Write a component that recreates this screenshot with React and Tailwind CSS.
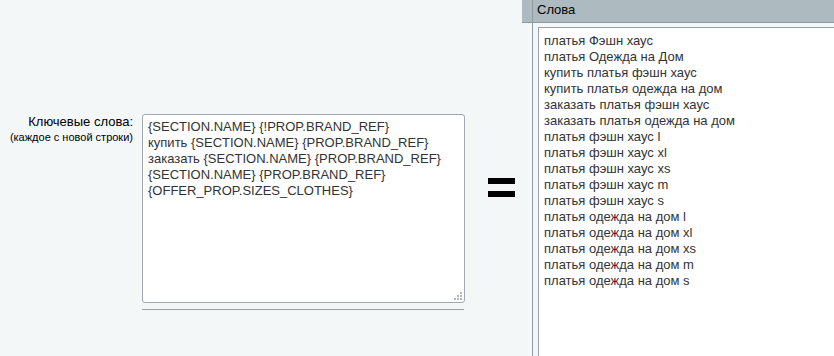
import React from 'react'

const keywords = [
  '{SECTION.NAME} {!PROP.BRAND_REF}',
  'купить {SECTION.NAME} {PROP.BRAND_REF}',
  'заказать {SECTION.NAME} {PROP.BRAND_REF}',
  '{SECTION.NAME} {PROP.BRAND_REF}',
  '{OFFER_PROP.SIZES_CLOTHES}',
]

const words = [
  'платья Фэшн хаус',
  'платья Одежда на Дом',
  'купить платья фэшн хаус',
  'купить платья одежда на дом',
  'заказать платья фэшн хаус',
  'заказать платья одежда на дом',
  'платья фэшн хаус l',
  'платья фэшн хаус xl',
  'платья фэшн хаус xs',
  'платья фэшн хаус m',
  'платья фэшн хаус s',
  'платья одежда на дом l',
  'платья одежда на дом xl',
  'платья одежда на дом xs',
  'платья одежда на дом m',
  'платья одежда на дом s',
]

// little dotted resize grip, like the old browser one
const Grip = () => (
  <svg className="absolute right-[3px] bottom-[3px]" width="8" height="8" viewBox="0 0 8 8">
    {[[6, 0], [3, 3], [6, 3], [0, 6], [3, 6], [6, 6]].map(([x, y], i) => (
      <rect key={i} x={x} y={y} width="2" height="2" fill="#b4b8bd" />
    ))}
  </svg>
)

export default function App() {
  return (
    <div className="flex h-[356px] w-[834px] overflow-hidden bg-[#f4f7f8] font-['Liberation_Sans',Arial,sans-serif] text-black">
      {/* --- LEFT: template --- */}
      <div className="flex w-[522px] shrink-0">
        <div className="flex pt-[114px]">
          <div className="w-[133px] text-right">
            <div className="text-[13px] leading-[16px]">Ключевые слова:</div>
            <div className="text-[11px] leading-[14px]">(каждое с новой строки)</div>
          </div>
          <div className="ml-[9px] w-[323px]">
            <div className="relative">
              <textarea
                readOnly
                defaultValue={keywords.join('\n')}
                className="block h-[189px] w-[323px] resize-none overflow-hidden rounded-[3px] border border-[#a3a8af] bg-white px-[5px] pt-[4px] text-[13px] leading-[16px] text-[#333] outline-none"
              />
              <Grip />
            </div>
            <div className="mt-[6px] h-px w-[322px] bg-[#9ba0a8]" />
          </div>
        </div>

        {/* equals sign */}
        <div className="ml-[23px] flex flex-col pt-[178px]">
          <div className="h-[6px] w-[27px] bg-black" />
          <div className="mt-[7px] h-[6px] w-[27px] bg-black" />
        </div>
      </div>

      {/* --- RIGHT: result column --- */}
      <div className="flex min-w-0 flex-1 flex-col">
        <div className="flex h-[23px] shrink-0 border-b border-[#8e9ba0] bg-[#adbbc0]">
          <div className="w-[11px] shrink-0 border-r border-[#8e9ba0]" />
          <div className="pl-[4px] pt-[2px] text-[13px] leading-[16px]">Слова</div>
        </div>
        <div className="flex flex-1">
          <div className="w-[11px] shrink-0 border-r border-[#8e9ba0]" />
          <div className="pl-[5px] pt-[4px]">
            <textarea
              readOnly
              defaultValue={words.join('\n')}
              className="block h-[400px] w-[320px] resize-none overflow-hidden border border-[#9aa2aa] bg-white px-[5px] pt-[5px] text-[13px] leading-[16px] text-[#333] outline-none"
            />
          </div>
        </div>
      </div>
    </div>
  )
}
